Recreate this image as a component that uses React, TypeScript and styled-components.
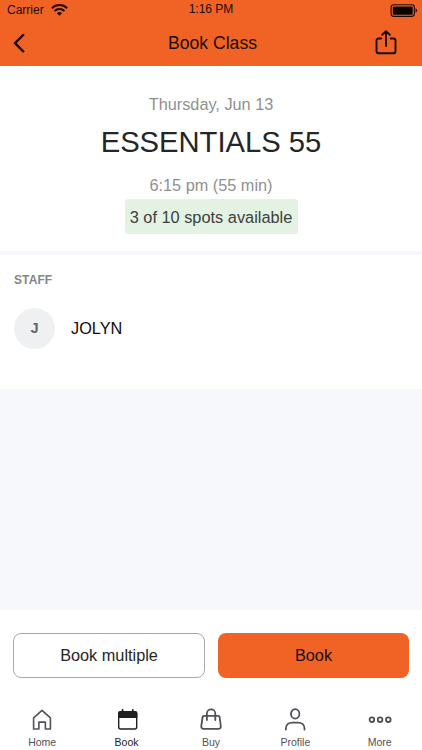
import React from "react";
import styled, { createGlobalStyle } from "styled-components";

const GlobalStyle = createGlobalStyle`
  * { box-sizing: border-box; }
  body { margin: 0; background: #fff; font-family: "Liberation Sans", Arial, Helvetica, sans-serif; }
  button { font-family: inherit; padding: 0; margin: 0; border: 0; background: none; }
  svg { display: block; }
`;

const Screen = styled.div`
  width: 422px;
  height: 750px;
  display: flex;
  flex-direction: column;
  background: #f7f8fb;
  overflow: hidden;
`;

const Header = styled.header`
  height: 66px;
  flex: none;
  background: #f16324;
  color: #1c0b04;
`;

const StatusBar = styled.div`
  height: 20px;
  display: grid;
  grid-template-columns: 1fr auto 1fr;
  align-items: center;
  padding: 0 4px 0 7px;
  font-size: 12px;
  line-height: 20px;
`;

const Carrier = styled.div`
  display: flex;
  align-items: center;
  gap: 7px;
`;

const Clock = styled.span`
  margin-right: 3px;
  line-height: 18px;
  height: 20px;
`;

const Battery = styled.div`
  display: flex;
  justify-content: flex-end;
`;

const NavBar = styled.div`
  height: 46px;
  display: grid;
  grid-template-columns: 60px 1fr 60px;
  align-items: center;
`;

const NavButton = styled.button<{ $end?: boolean }>`
  height: 46px;
  display: flex;
  align-items: center;
  justify-content: ${(p) => (p.$end ? "flex-end" : "flex-start")};
  padding: ${(p) => (p.$end ? "0 25px 2px 0" : "0 0 1px 12px")};
  color: inherit;
`;

const NavTitle = styled.h1`
  margin: 0;
  padding-left: 3px;
  text-align: center;
  font-size: 17.6px;
  font-weight: 400;
  line-height: 46px;
`;

const Summary = styled.section`
  height: 185px;
  flex: none;
  display: flex;
  flex-direction: column;
  align-items: center;
  padding-top: 27px;
  background: #fff;
`;

const Meta = styled.p`
  margin: 0;
  font-size: 16.3px;
  line-height: 22px;
  color: #909090;
`;

const ClassName = styled.h2`
  margin: 9px 0 14px;
  font-size: 29.2px;
  font-weight: 400;
  line-height: 36px;
  color: #252527;
`;

const Spots = styled.div`
  width: 173px;
  height: 35px;
  margin-top: 3px;
  border-radius: 3px;
  background: #e4f2e3;
  color: #3b413c;
  font-size: 16.35px;
  line-height: 36px;
  text-align: center;
  white-space: nowrap;
`;

const Staff = styled.section`
  height: 134px;
  flex: none;
  margin-top: 4px;
  padding: 18px 14px 0;
  background: #fff;
`;

const SectionLabel = styled.h3`
  margin: 0 0 20px;
  font-size: 12px;
  line-height: 15px;
  letter-spacing: 0.1px;
  color: #858587;
`;

const StaffRow = styled.div`
  display: flex;
  align-items: center;
  gap: 16px;
  font-size: 16.3px;
  color: #0d0d0d;
`;

const Avatar = styled.div`
  width: 41px;
  height: 41px;
  border-radius: 50%;
  background: #eff0f2;
  color: #65676b;
  font-size: 14.5px;
  font-weight: 700;
  line-height: 41px;
  text-align: center;
`;

const Actions = styled.div`
  height: 90px;
  flex: none;
  margin-top: auto;
  display: grid;
  grid-template-columns: 192px 191px;
  gap: 13px;
  padding: 23px 13px 0;
  background: #fff;
`;

const ActionButton = styled.button<{ $primary?: boolean }>`
  height: 45px;
  border-radius: 8px;
  border: ${(p) => (p.$primary ? "0" : "1px solid #a9a9ab")};
  background: ${(p) => (p.$primary ? "#f16324" : "#fff")};
  color: ${(p) => (p.$primary ? "#1c0b04" : "#252527")};
  font-size: 16.3px;
`;

const TabBar = styled.nav`
  height: 50px;
  flex: none;
  display: grid;
  grid-template-columns: repeat(5, 84.4px);
  background: #fff;
`;

const Tab = styled.button<{ $active?: boolean }>`
  display: flex;
  flex-direction: column;
  align-items: center;
  padding-top: 7px;
  color: ${(p) => (p.$active ? "#1f2023" : "#505157")};
  font-size: 10.5px;
  line-height: 12px;
`;

const TabIcon = styled.svg`
  width: 26px;
  height: 26px;
  margin-bottom: 3px;
  fill: none;
  stroke: currentColor;
  stroke-width: 1.8;
  stroke-linecap: round;
  stroke-linejoin: round;
`;

const tabs = [
  {
    label: "Home",
    icon: <path d="M4.600 10.900 13 3.300l8.400 7.600V22h-5v-6.900H9.900V22H4.600Z" strokeWidth="1.600" />,
  },
  {
    label: "Book",
    active: true,
    icon: (
      <>
        <rect x="4.700" y="4.700" width="18" height="17.300" rx="2" strokeWidth="1.400" />
        <path d="M4.700 10.400V6.300q0-1.600 1.800-1.600h14.400q1.800 0 1.800 1.600v4.100Z" fill="currentColor" strokeWidth="1.400" />
        <path d="M8.600 3v2M18.800 3v2" />
      </>
    ),
  },
  {
    label: "Buy",
    icon: (
      <>
        <path d="M6 8.800h14.200q1.200 0 1.400 1.200l1.200 9q.3 2.800-2.500 2.800H5.800Q3 21.800 3.300 19l1.300-9q.2-1.200 1.400-1.200Z" />
        <path d="M8.900 13V6.500a4.200 4.200 0 0 1 8.400 0V13" />
      </>
    ),
  },
  {
    label: "Profile",
    icon: (
      <>
        <ellipse cx="13.200" cy="6.900" rx="4.200" ry="4.700" />
        <path d="M3.900 22.500v-1.200c0-3.800 3.200-5.600 6.500-5.600H16c3.300 0 6.500 1.800 6.500 5.600v1.200" />
      </>
    ),
  },
  {
    label: "More",
    icon: (
      <>
        <circle cx="4.900" cy="12.700" r="2.300" />
        <circle cx="13.100" cy="12.700" r="2.300" />
        <circle cx="21.300" cy="12.700" r="2.300" />
      </>
    ),
  },
];

const WifiIcon = () => (
  <svg width="17" height="12" viewBox="0 0 17 12" fill="none" stroke="currentColor" strokeWidth="1.900">
    <path d="M.8 4.200a11 11 0 0 1 15.400 0M3.500 7a7.200 7.200 0 0 1 10 0" />
    <path d="M8.500 11.700 5.900 9.200a3.800 3.800 0 0 1 5.200 0Z" fill="currentColor" stroke="none" />
  </svg>
);

const BatteryIcon = () => (
  <svg width="28" height="13" viewBox="0 0 28 13">
    <rect x="1.100" y=".8" width="23.300" height="11.600" rx="2.600" fill="none" stroke="currentColor" strokeWidth="1.100" />
    <rect x="2.800" y="2.500" width="19.900" height="8.200" rx="1" fill="#0a0300" />
    <path d="M25.600 4.200q1.500.7 1.500 2.300t-1.500 2.300Z" fill="currentColor" />
  </svg>
);

const BackIcon = () => (
  <svg width="13" height="20" viewBox="0 0 13 20" fill="none" stroke="currentColor" strokeWidth="2.400" strokeLinecap="round" strokeLinejoin="round">
    <path d="M11.200 2 3 10.200l8.200 8.200" />
  </svg>
);

const ShareIcon = () => (
  <svg width="22" height="26" viewBox="0 0 22 26" fill="none" stroke="currentColor" strokeWidth="1.900" strokeLinecap="round" strokeLinejoin="round">
    <path d="M6.300 9.500H3.700q-2.200 0-2.200 2.200v10.200q0 2.400 2.400 2.400h14.200q2.400 0 2.400-2.400V11.700q0-2.200-2.200-2.200h-2.600" />
    <path d="M11 17V2.300M7.200 5.800 11 2.200l3.800 3.600" />
  </svg>
);

export default function App() {
  return (
    <>
      <GlobalStyle />
      <Screen>
        <Header>
          <StatusBar>
            <Carrier>
              Carrier
              <WifiIcon />
            </Carrier>
            <Clock>1:16 PM</Clock>
            <Battery>
              <BatteryIcon />
            </Battery>
          </StatusBar>
          <NavBar>
            <NavButton aria-label="Back">
              <BackIcon />
            </NavButton>
            <NavTitle>Book Class</NavTitle>
            <NavButton $end aria-label="Share">
              <ShareIcon />
            </NavButton>
          </NavBar>
        </Header>
        <Summary>
          <Meta>Thursday, Jun 13</Meta>
          <ClassName>ESSENTIALS 55</ClassName>
          <Meta>6:15 pm (55 min)</Meta>
          <Spots>3 of 10 spots available</Spots>
        </Summary>
        <Staff>
          <SectionLabel>STAFF</SectionLabel>
          <StaffRow>
            <Avatar>J</Avatar>
            JOLYN
          </StaffRow>
        </Staff>
        <Actions>
          <ActionButton>Book multiple</ActionButton>
          <ActionButton $primary>Book</ActionButton>
        </Actions>
        <TabBar>
          {tabs.map((tab) => (
            <Tab key={tab.label} $active={tab.active}>
              <TabIcon viewBox="0 0 26 26">{tab.icon}</TabIcon>
              {tab.label}
            </Tab>
          ))}
        </TabBar>
      </Screen>
    </>
  );
}
